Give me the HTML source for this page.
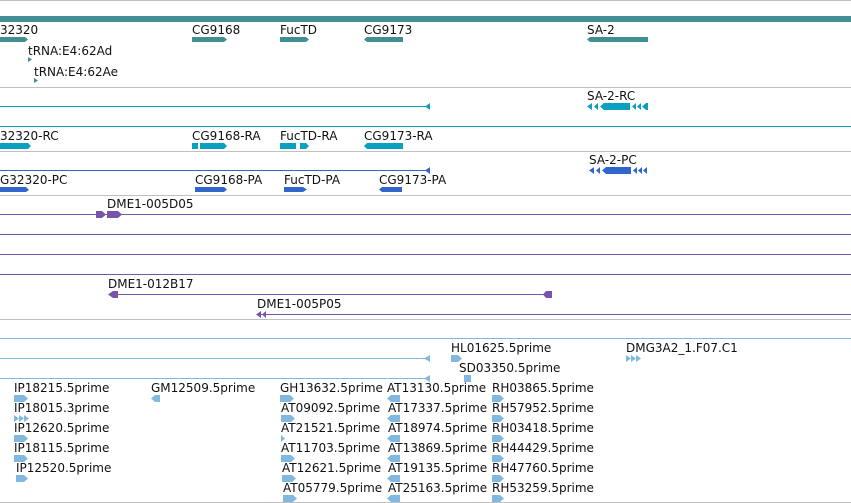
<!DOCTYPE html>
<html><head><meta charset="utf-8"><style>
html,body{margin:0;padding:0;background:#fff;width:851px;height:503px;overflow:hidden}
svg{display:block}
text{font-family:"DejaVu Sans","Liberation Sans",sans-serif;font-size:12px;fill:#111}
</style></head><body>
<svg width="851" height="503" viewBox="0 0 851 503">
<g stroke="#c0c0c0" stroke-width="1">
<line x1="0" y1="0.5" x2="851" y2="0.5"/>
<line x1="0" y1="87.5" x2="851" y2="87.5"/>
<line x1="0" y1="151.5" x2="851" y2="151.5"/>
<line x1="0" y1="195.5" x2="851" y2="195.5"/>
<line x1="0" y1="319.5" x2="851" y2="319.5"/>
<line x1="0" y1="502.5" x2="851" y2="502.5"/>
</g>
<rect x="0" y="16" width="851" height="6" fill="#418f93"/>
<g fill="#418f93">
<path d="M0 37H25L28 39.5L25 42H0Z"/>
<path d="M192 37H224L227 39.5L224 42H192Z"/>
<path d="M280 37H306L309 39.5L306 42H280Z"/>
<path d="M367 37H403V42H367L364 39.5Z"/>
<path d="M590 37H648V42H590L587 39.5Z"/>
<path d="M28 57L32 59.5L28 62Z"/>
<path d="M34 78L38 80.5L34 83Z"/>
</g>
<text x="0" y="34">32320</text>
<text x="192" y="34">CG9168</text>
<text x="280" y="34">FucTD</text>
<text x="364" y="34">CG9173</text>
<text x="587" y="34">SA-2</text>
<text x="28" y="55">tRNA:E4:62Ad</text>
<text x="34" y="76">tRNA:E4:62Ae</text>
<line x1="0" y1="106.5" x2="426" y2="106.5" stroke="#0aa0c0"/>
<path d="M425 106.5L430 103V110Z" fill="#0aa0c0"/>
<line x1="0" y1="126.5" x2="851" y2="126.5" stroke="#0aa0c0"/>
<g fill="#0aa0c0">
<path d="M587 106.5L592 103V110ZM594 106.5L598 103V110ZM600 106.5L604 103H630V110H604ZM632 106.5L636 103V110ZM637 106.5L641 103V110ZM642 106.5L646 103H648V110H646Z"/>
<path d="M0 143H28L31 146L28 149H0Z"/>
<path d="M192 143H198V149H192ZM200 143H224L227 146L224 149H200Z"/>
<path d="M280 143H296V149H280ZM300 143H306L309 146L306 149H300Z"/>
<path d="M367 143H403V149H367L364 146Z"/>
</g>
<text x="587" y="100">SA-2-RC</text>
<text x="0" y="140">32320-RC</text>
<text x="192" y="140">CG9168-RA</text>
<text x="280" y="140">FucTD-RA</text>
<text x="364" y="140">CG9173-RA</text>
<line x1="0" y1="170.5" x2="426" y2="170.5" stroke="#3366cc"/>
<path d="M425 170.5L430 167V174Z" fill="#3366cc"/>
<g fill="#3366cc">
<path d="M589 170.5L594 167V174ZM596 170.5L600 167V174ZM602 170.5L606 167H631V174H606ZM633 170.5L637 167V174ZM638 170.5L642 167V174ZM643 170.5L647 167V174Z"/>
<path d="M0 187H26L29 190L26 192H0Z"/>
<path d="M195 187H224L227 189.5L224 192H195Z"/>
<path d="M284 187H303L307 189.5L303 192H284Z"/>
<path d="M382 187H402V192H382L379 189.5Z"/>
</g>
<text x="589" y="164">SA-2-PC</text>
<text x="0" y="184">G32320-PC</text>
<text x="195" y="184">CG9168-PA</text>
<text x="284" y="184">FucTD-PA</text>
<text x="379" y="184">CG9173-PA</text>
<g stroke="#7755aa">
<line x1="0" y1="214.5" x2="851" y2="214.5"/>
<line x1="0" y1="234.5" x2="851" y2="234.5"/>
<line x1="0" y1="254.5" x2="851" y2="254.5"/>
<line x1="0" y1="274.5" x2="851" y2="274.5"/>
<line x1="118" y1="294.5" x2="552" y2="294.5"/>
<line x1="258" y1="314.5" x2="851" y2="314.5"/>
</g>
<g fill="#7755aa">
<path d="M96 211H102L106 214.5L102 218H96ZM107 211H118L122 214.5L118 218H107Z"/>
<path d="M108 294.5L113 291H118V298H113Z"/>
<path d="M546 291H552V298H546L543 294.5Z"/>
<path d="M256 314.5L261 311V318ZM262 314.5L266 311V318Z"/>
</g>
<text x="107" y="208">DME1-005D05</text>
<text x="108" y="288">DME1-012B17</text>
<text x="257" y="308">DME1-005P05</text>
<g stroke="#80b8e0">
<line x1="0" y1="338.5" x2="851" y2="338.5"/>
<line x1="0" y1="358.5" x2="428" y2="358.5"/>
<line x1="0" y1="378.5" x2="428" y2="378.5"/>
</g>
<g fill="#80b8e0">
<path d="M424 358.5L430 355V362Z"/>
<path d="M424 378.5L430 375V382Z"/>
<path d="M451 355H458L462 358.5L458 362H451Z"/>
<path d="M464 375H471V382H464Z"/>
<path d="M626 355L631 358.5L626 362ZM631 355L636 358.5L631 362ZM636 355L641 358.5L636 362Z"/>
<path d="M14 395H24L28 398.5L24 402H14Z"/>
<path d="M14 415L19 418.5L14 422ZM19 415L24 418.5L19 422ZM24 415L29 418.5L24 422Z"/>
<path d="M14 435H24L28 438.5L24 442H14Z"/>
<path d="M14 455H24L28 458.5L24 462H14Z"/>
<path d="M16 475H24L28 478.5L24 482H16Z"/>
<path d="M155 395H160V402H155L151 398.5Z"/>
<path d="M280 395H290L294 398.5L290 402H280Z"/>
<path d="M281 415H291L295 418.5L291 422H281Z"/>
<path d="M281 435L285 438.5L281 442Z"/>
<path d="M281 455H291L295 458.5L291 462H281Z"/>
<path d="M282 475H292L296 478.5L292 482H282Z"/>
<path d="M283 495H293L297 498.5L293 502H283Z"/>
<path d="M391 395H400V402H391L387 398.5Z"/>
<path d="M391 415H400V422H391L387 418.5Z"/>
<path d="M391 435H400V442H391L387 438.5Z"/>
<path d="M391 455H400V462H391L387 458.5Z"/>
<path d="M391 475H400V482H391L387 478.5Z"/>
<path d="M391 495H400V502H391L387 498.5Z"/>
<path d="M492 395H500L504 398.5L500 402H492Z"/>
<path d="M492 415H500L504 418.5L500 422H492Z"/>
<path d="M492 435H500L504 438.5L500 442H492Z"/>
<path d="M492 455H500L504 458.5L500 462H492Z"/>
<path d="M492 475H500L504 478.5L500 482H492Z"/>
<path d="M492 495H500L504 498.5L500 502H492Z"/>
</g>
<text x="451" y="352">HL01625.5prime</text>
<text x="459" y="372">SD03350.5prime</text>
<text x="626" y="352">DMG3A2_1.F07.C1</text>
<g>
<text x="14" y="392">IP18215.5prime</text>
<text x="14" y="412">IP18015.3prime</text>
<text x="14" y="432">IP12620.5prime</text>
<text x="14" y="452">IP18115.5prime</text>
<text x="16" y="472">IP12520.5prime</text>
<text x="151" y="392">GM12509.5prime</text>
<text x="280" y="392">GH13632.5prime</text>
<text x="281" y="412">AT09092.5prime</text>
<text x="281" y="432">AT21521.5prime</text>
<text x="281" y="452">AT11703.5prime</text>
<text x="282" y="472">AT12621.5prime</text>
<text x="283" y="492">AT05779.5prime</text>
<text x="387" y="392">AT13130.5prime</text>
<text x="388" y="412">AT17337.5prime</text>
<text x="388" y="432">AT18974.5prime</text>
<text x="388" y="452">AT13869.5prime</text>
<text x="388" y="472">AT19135.5prime</text>
<text x="388" y="492">AT25163.5prime</text>
<text x="492" y="392">RH03865.5prime</text>
<text x="492" y="412">RH57952.5prime</text>
<text x="492" y="432">RH03418.5prime</text>
<text x="492" y="452">RH44429.5prime</text>
<text x="492" y="472">RH47760.5prime</text>
<text x="492" y="492">RH53259.5prime</text>
</g>
</svg>
</body></html>
